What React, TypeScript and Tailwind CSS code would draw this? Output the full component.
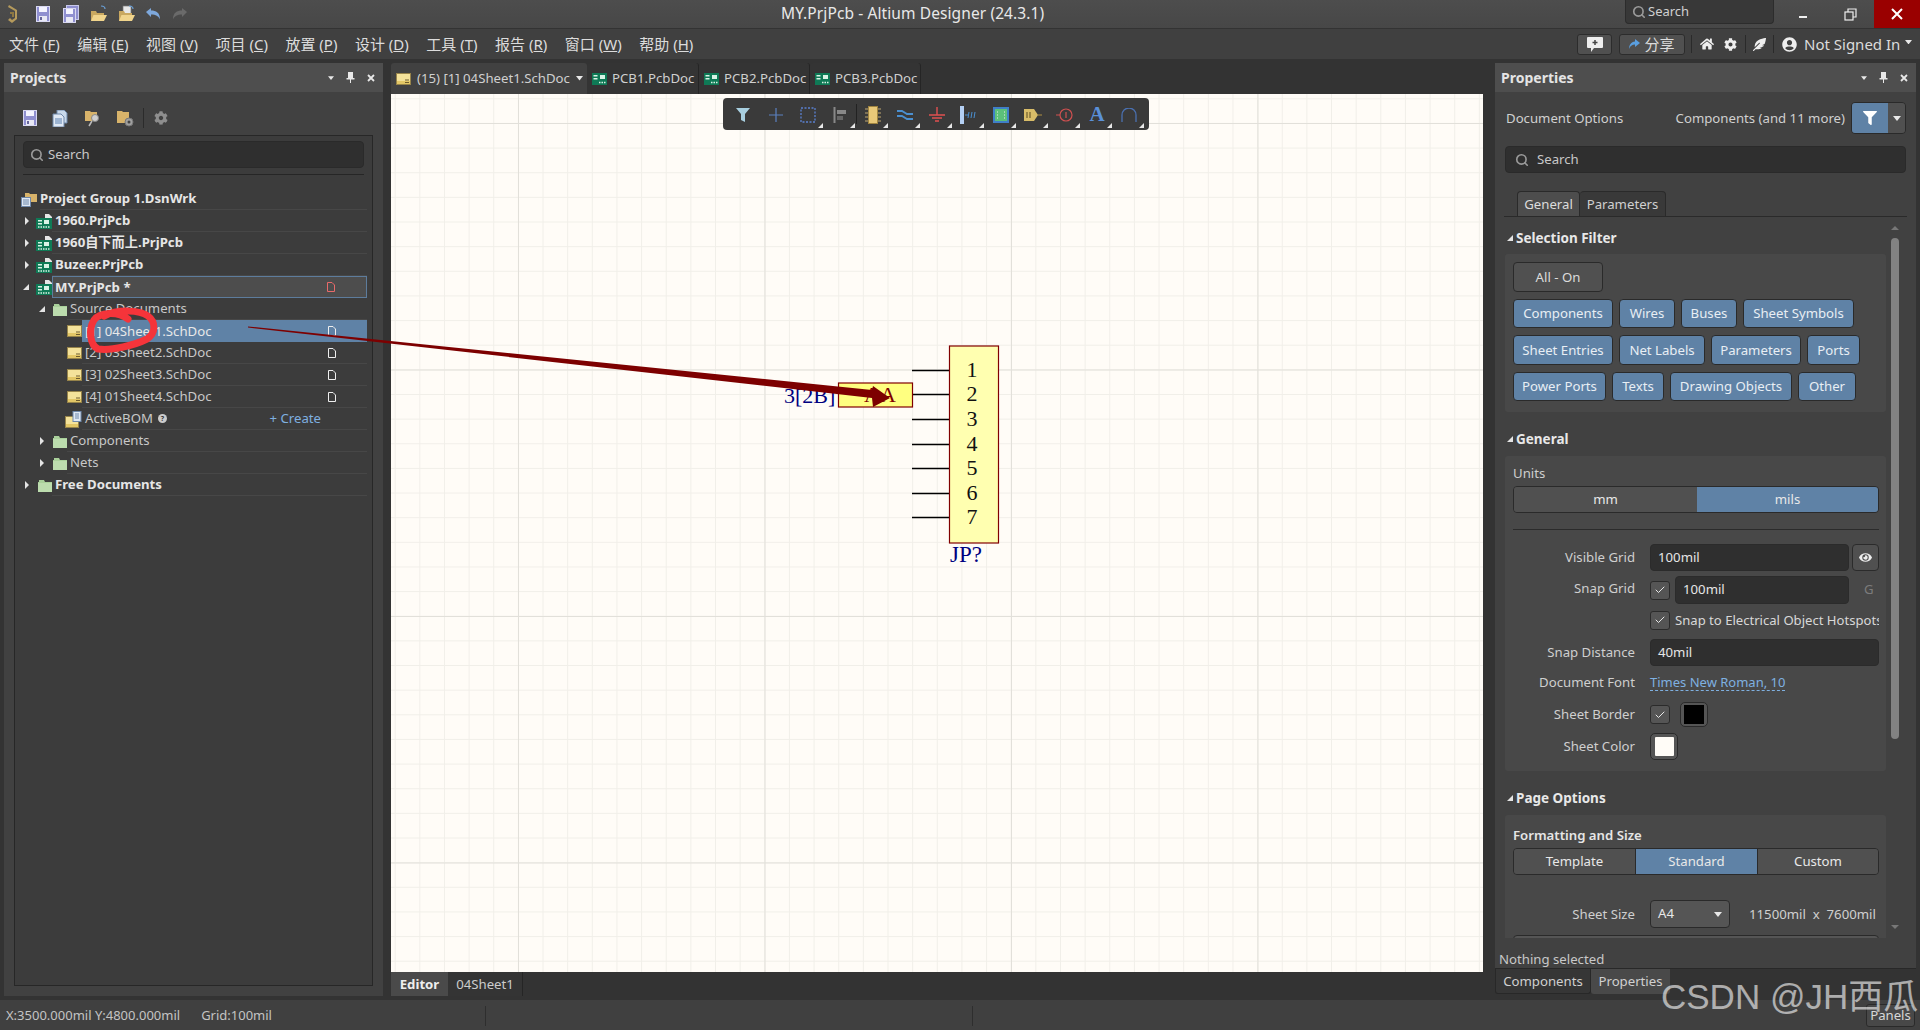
import React from "react";
import { Search, Check } from "lucide-react";
import { FaHome, FaCog, FaUserCircle, FaFilter, FaFeatherAlt, FaEye } from "react-icons/fa";

const Disk = ({ c = "#8f8fd0" }: { c?: string }) => (
  <svg width="14" height="16" viewBox="0 0 14 16"><rect x="0.5" y="0.5" width="13" height="15" fill={c} stroke="#d8d8f0" /><rect x="3" y="1" width="8" height="5" fill="#f4f4ff" /><rect x="3" y="10" width="8" height="5" fill="#e8e8f4" /><rect x="4" y="11" width="2" height="3" fill="#66669a" /></svg>
);
const DiskAll = () => (
  <svg width="16" height="18" viewBox="0 0 16 18"><rect x="3.5" y="0.5" width="12" height="14" fill="#8f8fd0" stroke="#c8c8ea" /><rect x="0.5" y="3.5" width="12" height="14" fill="#8f8fd0" stroke="#d8d8f0" /><rect x="3" y="4" width="7" height="5" fill="#f4f4ff" /><rect x="3" y="12" width="7" height="5" fill="#e8e8f4" /></svg>
);
const OpenFolder = ({ page }: { page?: boolean }) => (
  <svg width="18" height="18" viewBox="0 0 18 18">
    {page && <rect x="5" y="1" width="8" height="9" fill="#e8e8e8" stroke="#777" strokeWidth="0.7" />}
    <path d="M1 16V6h5l1 2h7v8z" fill="#c9a860" />
    <path d="M1 16l2.5-6H17l-3 6z" fill="#f0d48c" />
    <path d="M11 1c2 0 4 1 4 3" stroke="#6aa0d8" strokeWidth="1.2" fill="none" />
  </svg>
);
const ArrowUndo = ({ c, flip }: { c: string; flip?: boolean }) => (
  <svg width="16" height="14" viewBox="0 0 16 14" className={flip ? "-scale-x-100" : ""}><path d="M1 5l5-4v2.5c5 0 9 2 9 9-1.500-3.500-4-5-9-5V10z" fill={c} /></svg>
);
const Logo = () => (
  <svg width="12" height="20" viewBox="0 0 12 20"><path d="M2 1l8 5v9l-5 4-4-3 2-2 2 2 3-2V7L1 3z" fill="#b59a5c" /><path d="M3 8h4v5H5v-3H3z" fill="#8d7742" /></svg>
);
const SheetIcon = ({ w = 15 }: { w?: number }) => (
  <svg width={w} height="12" viewBox="0 0 15 12"><rect x="0.5" y="0.5" width="14" height="11" fill="#f4e29a" stroke="#96834a" /><rect x="1" y="8" width="13" height="3" fill="#e3c766" /><path d="M9 7h4M9 9.500h4" stroke="#6e5c2c" /></svg>
);
const BomIcon = () => (
  <svg width="17" height="17" viewBox="0 0 17 17"><rect x="0.5" y="5.5" width="13" height="11" fill="#f4e29a" stroke="#96834a" /><rect x="1" y="13" width="12" height="3" fill="#e3c766" /><rect x="8" y="0.5" width="8" height="10" fill="#dfe8f4" stroke="#6f88aa" /><path d="M10 3h4M10 5h4M10 7h4" stroke="#6f88aa" /></svg>
);
const PcbIcon = () => (
  <svg width="16" height="15" viewBox="0 0 16 15"><path d="M9 0h4l3 3v5H9z" fill="#e6e6e6" /><rect x="0" y="4" width="16" height="11" fill="#0f7a56" /><rect x="2" y="6" width="4" height="1.500" fill="#d9f3e6" /><rect x="2" y="9" width="4" height="1.500" fill="#d9f3e6" /><rect x="8" y="6" width="5" height="4" fill="#d9f3e6" /><path d="M2 13h12" stroke="#d9f3e6" strokeWidth="1.400" strokeDasharray="1.500 1" /></svg>
);
const PcbTab = () => (
  <svg width="15" height="12" viewBox="0 0 15 12"><rect width="15" height="12" fill="#0f7a56" /><rect x="1.500" y="2" width="4" height="1.500" fill="#d9f3e6" /><rect x="1.500" y="5" width="4" height="1.500" fill="#d9f3e6" /><rect x="8" y="2" width="5" height="4" fill="#d9f3e6" /><path d="M7 9.500h7" stroke="#d9f3e6" strokeWidth="1.400" strokeDasharray="1.500 1" /></svg>
);
const Folder = ({ w = 14 }: { w?: number }) => (
  <svg width={w} height="13" viewBox="0 0 14 13"><path d="M0 3h1V1h5l1 2h7v10H0z" fill="#a9d09a" /><path d="M0 4h14v9H0z" fill="#bcdcae" /></svg>
);
const GroupIcon = () => (
  <svg width="16" height="16" viewBox="0 0 16 16"><path d="M4 2h4l1 1h7v8H4z" fill="#d8b36a" /><rect x="0.500" y="6.500" width="9" height="9" fill="#dfe8f4" stroke="#6f88aa" /><path d="M2 9h6M2 11h6M2 13h6" stroke="#6f88aa" /></svg>
);
const TriOpen = () => (
  <svg width="6" height="6" viewBox="0 0 6 6"><path d="M6 0v6H0z" fill="#e4e4e4" /></svg>
);
const TriClosed = () => (
  <svg width="4" height="8" viewBox="0 0 4 8"><path d="M0 0l4 4-4 4z" fill="#e4e4e4" /></svg>
);
const DocIcon = ({ c = "#eeeeee" }: { c?: string }) => (
  <svg width="8" height="10" viewBox="0 0 8 10"><path d="M0.500 0.500h4.500l2.500 2.500v6.500h-7z" fill="none" stroke={c} /></svg>
);
const CaretDown = ({ c = "#e8e8e8", w = 8 }: { c?: string; w?: number }) => (
  <svg width={w} height={w / 2 + 1} viewBox="0 0 8 5"><path d="M0 0h8L4 5z" fill={c} /></svg>
);
const Pin = () => (
  <svg width="9" height="11" viewBox="0 0 9 11"><path d="M2 0h5v6h1.500v1.500H5V11H4V7.500H.5V6H2z" fill="#e8e8e8" /></svg>
);
const Cross = () => (
  <svg width="8" height="8" viewBox="0 0 8 8"><path d="M1 1l6 6M7 1L1 7" stroke="#e8e8e8" strokeWidth="1.800" /></svg>
);
const SearchIcon = ({ size = 14 }: { size?: number }) => <Search size={size} strokeWidth={2.8} color="#9a9a9a" />;

const PanelHead = ({ title }: { title: string }) => (
  <div className="flex h-[29px] items-center bg-[#4e4e4e] pl-[6px] pr-[8px]">
    <span className="text-[14px] font-bold text-[#e4e4e4]">{title}</span>
    <div className="ml-auto flex items-center gap-[12px]"><CaretDown w={6} /><Pin /><Cross /></div>
  </div>
);

const menus: [string, string][] = [["文件", "F"], ["编辑", "E"], ["视图", "V"], ["项目", "C"], ["放置", "P"], ["设计", "D"], ["工具", "T"], ["报告", "R"], ["窗口", "W"], ["帮助", "H"]];

type RowProps = { gutter: number; tri?: "open" | "closed"; triGap?: number; icon?: React.ReactNode; bold?: boolean; children: React.ReactNode; right?: React.ReactNode; state?: "sel" | "focus" };
const Row = ({ gutter, tri, triGap = 7, icon, bold, children, right, state }: RowProps) => (
  <div className="flex h-[22px]">
    <div className="flex shrink-0 items-center justify-end" style={{ width: gutter, gap: triGap }}>
      {tri === "open" && <TriOpen />}
      {tri === "closed" && <TriClosed />}
      {icon}
    </div>
    <div className={`flex min-w-0 flex-1 items-center text-[13.2px] ${bold ? "font-bold text-[#e6e6e6]" : "text-[#c8c8c8]"} ${state === "sel" ? "bg-[#5f82a6] pl-[3px] text-[#e8e8e8]" : state === "focus" ? "border border-[#5d7c9c] bg-[#4d4d4d] pl-[2px]" : "border-b border-[#474747] pl-[3px]"}`}>
      <span className="whitespace-nowrap pt-[1px]">{children}</span>
      {right && <div className="ml-auto mr-[31px] flex items-center">{right}</div>}
    </div>
  </div>
);

const Chip = ({ w, h = "h-[29px]", children }: { w: string; h?: string; children: string }) => (
  <div className={`flex ${h} ${w} items-center justify-center rounded-[4px] border border-[#2a2a2a] bg-[#5f82a6] pt-[1px] text-[13.2px] text-[#e8eef4]`}>{children}</div>
);

const Label = ({ children, extra = "pt-[1px]" }: { children: string; extra?: string }) => (
  <div className={`w-[122px] shrink-0 text-right text-[13.2px] text-[#cfcfcf] ${extra}`}>{children}</div>
);
const Input = ({ w, h, children }: { w: string; h: string; children: string }) => (
  <div className={`flex ${w} ${h} items-center rounded-[4px] border border-[#2b2b2b] bg-[#2f2f2f] pl-[7px] text-[13.2px] text-[#e6e6e6]`}>{children}</div>
);
const CheckBox = () => (
  <div className="flex h-[19px] w-[20px] shrink-0 items-center justify-center rounded-[3px] border border-[#2b2b2b] bg-[#555555]"><Check size={12} color="#e8e8e8" strokeWidth={2} /></div>
);

const SectionHead = ({ title }: { title: string }) => (
  <div className="flex h-[44px] items-center gap-[3px] pt-[10px] text-[13.5px] font-bold text-[#e8e8e8]"><span className="ml-[2px]"><TriOpen /></span>{title}</div>
);

const tools: { el: React.ReactNode; corner: boolean }[] = [
  { corner: false, el: <svg width="18" height="16" viewBox="0 0 18 16"><path d="M1 1h14l-5 6v8l-4-2V7z" fill="#a8cfe0" /></svg> },
  { corner: false, el: <svg width="16" height="16" viewBox="0 0 16 16"><path d="M8 1v14M1 8h14" stroke="#5a80c0" strokeWidth="1.200" /></svg> },
  { corner: true, el: <svg width="16" height="16" viewBox="0 0 16 16"><rect x="1" y="1" width="14" height="14" fill="none" stroke="#5a80d0" strokeDasharray="2 1.500" strokeWidth="1.300" /></svg> },
  { corner: true, el: <svg width="14" height="16" viewBox="0 0 14 16"><path d="M1.500 0v16" stroke="#888" strokeWidth="2" /><rect x="4" y="3" width="9" height="4" fill="#888" /><rect x="4" y="9" width="6" height="4" fill="#666" /></svg> },
  { corner: true, el: <svg width="16" height="18" viewBox="0 0 16 18"><path d="M0 3h16M0 7h16M0 11h16M0 15h16" stroke="#c0a870" /><rect x="3.500" y="0.500" width="9" height="17" fill="#e8c878" stroke="#a08440" /></svg> },
  { corner: true, el: <svg width="16" height="12" viewBox="0 0 16 12"><path d="M0 2h5l5 3h6M0 7h5l5 3h6" stroke="#4a8fd0" strokeWidth="1.800" fill="none" /></svg> },
  { corner: true, el: <svg width="16" height="16" viewBox="0 0 16 16"><path d="M8 0v8M0 8h16M3 11h10M6 14h4" stroke="#e05050" strokeWidth="1.400" /></svg> },
  { corner: true, el: <svg width="18" height="18" viewBox="0 0 18 18"><rect x="0" y="0" width="4" height="18" fill="#b4d0f4" /><path d="M5 9h3M9 6l-1 6M12 6l-1 6M15 6l-1 6" stroke="#4a8fd0" /></svg> },
  { corner: true, el: <svg width="16" height="16" viewBox="0 0 16 16"><rect x="0" y="0" width="16" height="16" fill="#3f7fc8" /><rect x="2" y="2" width="12" height="12" fill="#5cc07a" /><path d="M4 5h1M4 8h1M4 11h1M11 5h1M11 8h1M11 11h1" stroke="#eee" /></svg> },
  { corner: true, el: <svg width="18" height="12" viewBox="0 0 18 12"><path d="M0 0h10l4 6-4 6H0z" fill="#d8bc68" /><path d="M14 6h4" stroke="#b09040" /><path d="M3 3v6M6 3v6" stroke="#5a4a20" /></svg> },
  { corner: true, el: <svg width="18" height="14" viewBox="0 0 18 14"><circle cx="10" cy="7" r="6" fill="none" stroke="#d05050" strokeWidth="1.200" /><path d="M0 7h4M10 4v6" stroke="#d05050" strokeWidth="1.200" /></svg> },
  { corner: true, el: <span className="font-['Liberation_Serif',serif] text-[21px] font-bold leading-none text-[#5a90d8]">A</span> },
  { corner: true, el: <svg width="16" height="14" viewBox="0 0 16 14"><path d="M1 14V7a7 7 0 0 1 14 0v7" fill="none" stroke="#4a70b0" strokeWidth="1.300" /></svg> },
];

export default function App() {
  return (
    <div className="relative flex h-[1030px] w-[1920px] flex-col overflow-hidden bg-[#333333] font-['Noto_Sans','Noto_Sans_CJK_SC',sans-serif] text-[#dcdcdc]">
      {/* title bar */}
      <div className="flex h-[29px] shrink-0 items-center border-b border-[#333333] bg-[linear-gradient(#4d4d4d,#474747)]">
        <div className="ml-[7px] flex w-[12px] justify-center"><Logo /></div>
        <div className="ml-[17px] flex items-center"><Disk /></div>
        <div className="ml-[13px] flex items-center"><DiskAll /></div>
        <div className="ml-[11px] flex items-center"><OpenFolder /></div>
        <div className="ml-[10px] flex items-center"><OpenFolder page /></div>
        <div className="ml-[9px] flex items-center"><ArrowUndo c="#7ea8dc" /></div>
        <div className="ml-[11px] flex items-center"><ArrowUndo c="#6a6a6a" flip /></div>
        <span className="ml-[593px] whitespace-nowrap text-[15.5px] tracking-[0.1px] text-[#e8e8e8]">MY.PrjPcb - Altium Designer (24.3.1)</span>
        <div className="ml-auto flex h-[24px] w-[149px] self-start items-center gap-[2px] rounded-b-[4px] border border-t-0 border-[#2c2c2c] bg-[#383838] pl-[6px] text-[13px] text-[#d0d0d0]"><SearchIcon />Search</div>
        <div className="ml-[14px] flex w-[30px] justify-center"><div className="mt-[5px] h-[2px] w-[8px] bg-[#eeeeee]" /></div>
        <div className="ml-[25px] flex w-[14px] justify-center"><svg width="13" height="13" viewBox="0 0 13 13"><rect x="1" y="4" width="8" height="8" fill="none" stroke="#eee" strokeWidth="1.200" /><path d="M4 4V1h8v8H9" fill="none" stroke="#eee" strokeWidth="1.200" /></svg></div>
        <div className="ml-[17px] flex h-[28px] w-[46px] self-start items-center justify-center bg-[#9a0000]"><svg width="12" height="12" viewBox="0 0 12 12"><path d="M1 1l10 10M11 1L1 11" stroke="#fff" strokeWidth="2" /></svg></div>
      </div>

      {/* menu bar */}
      <div className="flex h-[30px] shrink-0 items-center bg-[#404040] pl-[9px] pr-[8px]">
        <div className="flex gap-[17.5px] text-[15px] text-[#dcdcdc]">
          {menus.map(([n, k]) => (
            <span key={k} className="whitespace-nowrap">{n} (<u>{k}</u>)</span>
          ))}
        </div>
        <div className="ml-auto flex items-center">
          <div className="flex h-[21px] w-[35px] items-center justify-center rounded-[3px] border border-[#2c2c2c] bg-[#505050]">
            <svg width="16" height="15" viewBox="0 0 16 15"><path d="M1 0h14a1 1 0 0 1 1 1v9a1 1 0 0 1-1 1H7l-3 4v-4H1a1 1 0 0 1-1-1V1a1 1 0 0 1 1-1z" fill="#eeeeee" /><path d="M8 3v5M5.500 5.500h5" stroke="#444" strokeWidth="1.500" /></svg>
          </div>
          <div className="ml-[7px] flex h-[21px] w-[66px] items-center justify-center gap-[4px] rounded-[3px] border border-[#2c2c2c] bg-[#505050] text-[15px] text-[#dcdcdc]">
            <svg width="11" height="10" viewBox="0 0 11 10"><path d="M6 0l5 4-5 4V5.500C3 5.500 1 7 0 10c0-4 2-7 6-7.500z" fill="#5a9fe0" /></svg>分享
          </div>
          <div className="ml-[6px] mr-[8px] h-[18px] w-px bg-[#2a2a2a]" />
          <FaHome size={14} color="#eeeeee" />
          <FaCog size={13} color="#eeeeee" className="ml-[10px]" />
          <div className="ml-[8px] mr-[7px] h-[18px] w-px bg-[#2a2a2a]" />
          <FaFeatherAlt size={13} color="#eeeeee" />
          <div className="ml-[7px] mr-[8px] h-[18px] w-px bg-[#2a2a2a]" />
          <FaUserCircle size={15} color="#eeeeee" />
          <span className="ml-[7px] w-[99px] whitespace-nowrap text-[15px] text-[#dcdcdc]">Not Signed In</span>
          <div className="ml-[2px] mb-[4px]"><CaretDown w={7} /></div>
        </div>
      </div>

      {/* main */}
      <div className="flex min-h-0 flex-1 pt-[4px]">
        {/* projects */}
        <div className="ml-[4px] mb-[4px] flex w-[379px] shrink-0 flex-col bg-[#414141]">
          <PanelHead title="Projects" />
          <div className="flex h-[43px] shrink-0 items-center pt-[9px]">
            <div className="ml-[19px] flex w-[14px] justify-center"><Disk /></div>
            <div className="ml-[15px] flex items-center"><svg width="16" height="17" viewBox="0 0 16 17"><path d="M5 0h7l3 3v10H5z" fill="#c8d8ea" stroke="#6f88aa" /><path d="M1 4h8l3 3v10H1z" fill="#dfe8f4" stroke="#6f88aa" /><path d="M3 9h7M3 11h7M3 13h7" stroke="#5a80b0" /></svg></div>
            <div className="ml-[17px] flex items-center"><svg width="17" height="17" viewBox="0 0 17 17"><path d="M0 1h5l1 1h6v9H0z" fill="#d8b36a" /><circle cx="10" cy="8" r="3.500" fill="#d0d0d0" stroke="#888" /><path d="M7 11l-3 5" stroke="#bbb" strokeWidth="1.500" /></svg></div>
            <div className="ml-[15px] flex items-center"><svg width="17" height="17" viewBox="0 0 17 17"><path d="M0 1h5l1 1h6v11H0z" fill="#d8b36a" /><circle cx="12" cy="12" r="4" fill="#a0a0a0" stroke="#777" /><circle cx="12" cy="12" r="1.500" fill="#444" /></svg></div>
            <div className="ml-[9px] h-[20px] w-px bg-[#2b2b2b]" />
            <FaCog size={14} color="#8e8e8e" className="ml-[10px]" />
          </div>
          <div className="mx-[10px] flex h-[851px] flex-col border border-[#272727] bg-[#3c3c3c]">
            <div className="mx-[8px] mt-[5px] flex h-[27px] items-center gap-[4px] rounded-[4px] border border-[#2a2a2a] bg-[#2f2f2f] pl-[6px] text-[13.2px] text-[#c8c8c8]"><SearchIcon />Search</div>
            <div className="mx-[8px] mt-[6px] h-px bg-[#262626]" />
            <div className="mt-[13px] pr-[5px]">
              <Row gutter={25} icon={<span className="mr-[3px] flex"><GroupIcon /></span>} bold><span className="-ml-[3px]">Project Group 1.DsnWrk</span></Row>
              <Row gutter={37} tri="closed" icon={<PcbIcon />} bold>1960.PrjPcb</Row>
              <Row gutter={37} tri="closed" icon={<PcbIcon />} bold>1960自下而上.PrjPcb</Row>
              <Row gutter={37} tri="closed" icon={<PcbIcon />} bold>Buzeer.PrjPcb</Row>
              <Row gutter={37} tri="open" icon={<PcbIcon />} bold state="focus" right={<DocIcon c="#e86a6a" />}>MY.PrjPcb *</Row>
              <Row gutter={52} tri="open" triGap={8} icon={<Folder />}>Source Documents</Row>
              <Row gutter={67} icon={<SheetIcon />} state="sel" right={<DocIcon />}>[1] 04Sheet1.SchDoc</Row>
              <Row gutter={67} icon={<SheetIcon />} right={<DocIcon />}>[2] 03Sheet2.SchDoc</Row>
              <Row gutter={67} icon={<SheetIcon />} right={<DocIcon />}>[3] 02Sheet3.SchDoc</Row>
              <Row gutter={67} icon={<SheetIcon />} right={<DocIcon />}>[4] 01Sheet4.SchDoc</Row>
              <Row gutter={67} icon={<BomIcon />} right={<span className="mr-[15px] pt-[1px] text-[13.2px] text-[#7fb0e0]">+ Create</span>}>
                <span className="inline-flex items-center gap-[5px]">ActiveBOM<span className="flex h-[9px] w-[9px] items-center justify-center rounded-full bg-[#cccccc] text-[7px] font-bold text-[#333333]">?</span></span>
              </Row>
              <Row gutter={52} tri="closed" triGap={9} icon={<Folder />}>Components</Row>
              <Row gutter={52} tri="closed" triGap={9} icon={<Folder />}>Nets</Row>
              <Row gutter={37} tri="closed" triGap={9} icon={<Folder />} bold>Free Documents</Row>
            </div>
          </div>
        </div>

        {/* documents */}
        <div className="ml-[8px] mb-[4px] flex w-[1092px] shrink-0 flex-col">
          <div className="flex h-[31px] shrink-0 text-[13.2px] text-[#d0d0d0]">
            <div className="flex w-[196px] items-center gap-[6px] rounded-t-[3px] bg-[#414141] pl-[5px]"><SheetIcon />(15) [1] 04Sheet1.SchDoc<CaretDown w={7} /></div>
            {["PCB1.PcbDoc", "PCB2.PcbDoc", "PCB3.PcbDoc"].map((t, i) => (
              <div key={t} className={`flex ${i === 0 ? "w-[112px]" : "w-[111px]"} items-center gap-[5px] rounded-t-[3px] border-r border-[#252525] bg-[#343434] pl-[5px]`}><PcbTab />{t}</div>
            ))}
          </div>
          <div className="relative flex-1 overflow-hidden bg-[#fffcf7] bg-[linear-gradient(to_right,#e2e0da_1px,transparent_1px),linear-gradient(to_bottom,#e2e0da_1px,transparent_1px),linear-gradient(to_right,#f1efe9_1px,transparent_1px),linear-gradient(to_bottom,#f1efe9_1px,transparent_1px)] bg-size-[246.5px_246.5px,246.5px_246.5px,24.65px_24.65px,24.65px_24.65px] bg-position-[127px_0,0_29px,3.7px_0,0_4.3px]">
            <div className="absolute left-[332px] top-[4px] flex h-[32px] w-[426px] items-start rounded-[4px] bg-[#3a3a3a] pl-[5px] pt-[3px]">
              {tools.map((t, i) => (
                <React.Fragment key={i}>
                  {i === 4 && <div className="mt-[3px] h-[20px] w-px shrink-0 bg-[#222222]" />}
                  <div className="relative flex h-[27px] w-[32px] shrink-0 items-center justify-center">
                    {t.el}
                    {t.corner && <svg width="5" height="5" viewBox="0 0 5 5" className="absolute bottom-0 right-[1px]"><path d="M5 0v5H0z" fill="#e8e8e8" /></svg>}
                  </div>
                </React.Fragment>
              ))}
            </div>
            <svg className="absolute inset-0 h-full w-full" viewBox="391 94 1092 877">
              <g stroke="#000000" strokeWidth="1.500">
                {[370, 394, 419, 444, 468, 493, 517].map((y) => (
                  <line key={y} x1="912" x2="950" y1={y} y2={y} />
                ))}
              </g>
              <rect x="949.500" y="345.500" width="49" height="197" fill="#ffffb0" stroke="#800000" strokeWidth="1.200" />
              <rect x="838.500" y="382.500" width="74" height="24" fill="#ffff80" stroke="#800000" strokeWidth="1.200" />
              <g fontFamily="Liberation Serif, serif" fontSize="22" fill="#111111" textAnchor="middle">
                {[1, 2, 3, 4, 5, 6, 7].map((n, i) => (
                  <text key={n} x="972" y={[376, 400, 425, 450, 474, 499, 523][i]}>{n}</text>
                ))}
              </g>
              <text x="864" y="401" fontFamily="Liberation Serif, serif" fontSize="22" fill="#800000">AA</text>
              <text x="784" y="402" fontFamily="Liberation Serif, serif" fontSize="22" fill="#000080">3[2B]</text>
              <text x="950" y="561" fontFamily="Liberation Serif, serif" fontSize="23" fill="#000080">JP?</text>
            </svg>
          </div>
          <div className="flex h-[24px] shrink-0 text-[13.2px]">
            <div className="flex w-[57px] items-center justify-center bg-[#4a4a4a] pt-[1px] font-bold text-[#eeeeee]">Editor</div>
            <div className="flex w-[75px] items-center justify-center border-r border-[#252525] bg-[#343434] pt-[1px] text-[#cccccc]">04Sheet1</div>
          </div>
        </div>

        {/* properties */}
        <div className="ml-[12px] flex w-[421px] shrink-0 flex-col">
          <PanelHead title="Properties" />
          <div className="flex h-[876px] shrink-0 flex-col bg-[#414141]">
            <div className="mt-[10px] flex h-[32px] shrink-0 items-center pl-[11px] pr-[10px] text-[13.2px] text-[#d0d0d0]">
              <span className="pt-[1px]">Document Options</span>
              <span className="ml-auto pt-[1px]">Components (and 11 more)</span>
              <div className="ml-[6px] flex h-[32px] w-[55px] overflow-hidden rounded-[4px] border border-[#2a2a2a]">
                <div className="flex w-[36px] items-center justify-center bg-[#5f82a6]"><FaFilter size={14} color="#ffffff" /></div>
                <div className="flex flex-1 items-center justify-center bg-[#505050]"><CaretDown /></div>
              </div>
            </div>
            <div className="mx-[10px] mt-[12px] flex h-[27px] shrink-0 items-center gap-[8px] rounded-[4px] border border-[#2a2a2a] bg-[#2f2f2f] pl-[9px] pt-[1px] text-[13.2px] text-[#c8c8c8]"><SearchIcon />Search</div>
            <div className="mx-[9px] mt-[18px] flex h-[26px] shrink-0 border-b border-[#2a2a2a] pl-[13px] text-[13.2px]">
              <div className="flex w-[63px] items-center justify-center rounded-t-[4px] border border-b-0 border-[#2a2a2a] bg-[#4d4d4d] pt-[1px] text-[#dcdcdc]">General</div>
              <div className="flex w-[86px] items-center justify-center rounded-t-[4px] border border-b-0 border-l-0 border-[#2a2a2a] bg-[#393939] pt-[1px] text-[#d0d0d0]">Parameters</div>
            </div>
            <div className="flex h-[721px] shrink-0">
              <div className="ml-[10px] h-full w-[381px] shrink-0 overflow-hidden">
                <div className="flex h-[37px] items-center gap-[3px] pt-[5px] text-[13.5px] font-bold text-[#e8e8e8]"><span className="ml-[2px]"><TriOpen /></span>Selection Filter</div>
                <div className="flex flex-col rounded-[3px] bg-[#484848] px-[8px] pb-[11px] pt-[8px]">
                  <div className="flex h-[30px] w-[90px] items-center justify-center rounded-[4px] border border-[#2a2a2a] bg-[#505050] pt-[1px] text-[13.2px] text-[#dcdcdc]">All - On</div>
                  <div className="mt-[7px] flex gap-[6px]">
                    <Chip w="w-[100px]">Components</Chip><Chip w="w-[56px]">Wires</Chip><Chip w="w-[56px]">Buses</Chip><Chip w="w-[111px]">Sheet Symbols</Chip>
                  </div>
                  <div className="mt-[7px] flex gap-[6px]">
                    <Chip h="h-[30px]" w="w-[100px]">Sheet Entries</Chip><Chip h="h-[30px]" w="w-[86px]">Net Labels</Chip><Chip h="h-[30px]" w="w-[90px]">Parameters</Chip><Chip h="h-[30px]" w="w-[53px]">Ports</Chip>
                  </div>
                  <div className="mt-[7px] flex gap-[6px]">
                    <Chip w="w-[93px]">Power Ports</Chip><Chip w="w-[52px]">Texts</Chip><Chip w="w-[122px]">Drawing Objects</Chip><Chip w="w-[58px]">Other</Chip>
                  </div>
                </div>

                <SectionHead title="General" />
                <div className="flex flex-col rounded-[3px] bg-[#484848] px-[8px] pb-[11px] pr-[7px] pt-[9px]">
                  <div className="h-[16px] text-[13.2px] leading-[16px] text-[#cfcfcf]">Units</div>
                  <div className="mt-[5px] flex h-[27px] overflow-hidden rounded-[4px] border border-[#2a2a2a] text-[13.2px] text-[#e8e8e8]">
                    <div className="flex w-[183px] items-center justify-center bg-[#505050] pt-[1px]">mm</div>
                    <div className="flex flex-1 items-center justify-center bg-[#5f82a6] pt-[1px]">mils</div>
                  </div>
                  <div className="mt-[16px] h-px bg-[#2b2b2b]" />
                  <div className="mt-[14px] flex h-[27px] items-center gap-[15px]">
                    <Label>Visible Grid</Label>
                    <div className="flex flex-1 gap-[3px]">
                      <Input w="w-[199px]" h="h-[27px]">100mil</Input>
                      <div className="flex h-[27px] w-[27px] items-center justify-center rounded-[4px] border border-[#2b2b2b] bg-[#505050]"><FaEye size={13} color="#eeeeee" /></div>
                    </div>
                  </div>
                  <div className="mt-[5px] flex h-[28px] items-center gap-[15px]">
                    <Label extra="pb-[3px]">Snap Grid</Label>
                    <div className="flex flex-1 items-center gap-[5px]">
                      <CheckBox />
                      <Input w="w-[174px]" h="h-[28px]">100mil</Input>
                      <span className="ml-[10px] text-[13.2px] text-[#7c7c7c]">G</span>
                    </div>
                  </div>
                  <div className="mt-[6px] flex h-[20px] items-center pl-[137px]">
                    <CheckBox />
                    <span className="ml-[5px] w-[204px] overflow-hidden whitespace-nowrap pt-[1px] text-[13.1px] text-[#d8d8d8]">Snap to Electrical Object Hotspots</span>
                  </div>
                  <div className="mt-[9px] flex h-[27px] items-center gap-[15px]">
                    <Label>Snap Distance</Label>
                    <Input w="flex-1" h="h-[27px]">40mil</Input>
                  </div>
                  <div className="mt-[8px] flex h-[16px] items-center gap-[15px]">
                    <Label>Document Font</Label>
                    <span className="border-b border-dashed border-[#7fb0e0] text-[13px] leading-[16px] text-[#7fb0e0]">Times New Roman, 10</span>
                  </div>
                  <div className="mt-[12px] flex h-[25px] items-center gap-[15px]">
                    <Label>Sheet Border</Label>
                    <CheckBox />
                    <div className="-ml-[5px] flex h-[25px] w-[28px] items-center justify-center rounded-[5px] border border-[#2a2a2a] bg-[#555555]"><div className="h-[19px] w-[20px] bg-[#000000]" /></div>
                  </div>
                  <div className="mt-[6px] flex h-[27px] items-center gap-[15px]">
                    <Label>Sheet Color</Label>
                    <div className="flex h-[27px] w-[28px] items-center justify-center rounded-[5px] border border-[#2a2a2a] bg-[#555555]"><div className="h-[19px] w-[19px] rounded-[1px] bg-[#fffcf7]" /></div>
                  </div>
                </div>

                <SectionHead title="Page Options" />
                <div className="flex flex-col rounded-[3px] bg-[#484848] px-[8px] pb-[11px] pr-[7px] pt-[12px]">
                  <div className="h-[16px] text-[13.2px] font-semibold leading-[16px] text-[#e6e6e6]">Formatting and Size</div>
                  <div className="mt-[5px] flex h-[27px] overflow-hidden rounded-[4px] border border-[#2a2a2a] text-[13.2px] text-[#e8e8e8]">
                    <div className="flex w-[122px] items-center justify-center border-r border-[#2a2a2a] bg-[#505050] pt-[1px]">Template</div>
                    <div className="flex w-[121px] items-center justify-center bg-[#5f82a6] pt-[1px]">Standard</div>
                    <div className="flex flex-1 items-center justify-center border-l border-[#2a2a2a] bg-[#505050] pt-[1px]">Custom</div>
                  </div>
                  <div className="mt-[25px] flex h-[28px] items-center gap-[15px]">
                    <Label>Sheet Size</Label>
                    <div className="flex h-[28px] w-[80px] items-center justify-between rounded-[4px] border border-[#2a2a2a] bg-[#555555] px-[7px] text-[13.2px] text-[#e8e8e8]">A4<CaretDown /></div>
                    <span className="ml-[4px] whitespace-pre pt-[1px] text-[13.2px] text-[#d0d0d0]">11500mil  x  7600mil</span>
                  </div>
                  <div className="mt-[7px] h-[28px] rounded-[4px] border border-[#2a2a2a] bg-[#555555]" />
                </div>
              </div>
              <div className="ml-[4px] flex h-full w-[10px] shrink-0 flex-col items-center">
                <svg width="8" height="4" viewBox="0 0 8 4" className="mt-[9px]"><path d="M4 0l4 4H0z" fill="#777777" /></svg>
                <div className="mt-[8px] h-[501px] w-[8px] rounded-[4px] bg-[#828282]" />
                <svg width="8" height="4" viewBox="0 0 8 4" className="mt-[186px]"><path d="M0 0h8L4 4z" fill="#777777" /></svg>
              </div>
            </div>
            <div className="flex h-[30px] shrink-0 items-end pl-[4px] text-[13.2px] leading-[18px] text-[#c8c8c8]">Nothing selected</div>
          </div>
          <div className="flex h-[26px] shrink-0 border-t border-[#282828] text-[13.2px] text-[#d0d0d0]">
            <div className="flex w-[96px] items-center justify-center rounded-b-[3px] border border-t-0 border-[#282828] bg-[#363636] pt-[1px]">Components</div>
            <div className="flex w-[79px] items-center justify-center rounded-b-[3px] bg-[#494949] pt-[1px]">Properties</div>
          </div>
        </div>
      </div>

      {/* status bar */}
      <div className="flex h-[30px] shrink-0 items-center bg-[#404040] pl-[6px] pt-[1px] text-[13px] text-[#c4c4c4]">
        <span className="whitespace-nowrap">X:3500.000mil Y:4800.000mil</span>
        <span className="ml-[21px] whitespace-nowrap">Grid:100mil</span>
        <div className="ml-[213px] h-[20px] w-px bg-[#2e2e2e]" />
        <div className="ml-[486px] h-[20px] w-px bg-[#2e2e2e]" />
        <div className="ml-auto mr-[5px] flex h-[23px] w-[49px] items-center justify-center rounded-[3px] border border-[#2a2a2a] bg-[#484848] text-[13.2px] text-[#d8d8d8]">Panels</div>
      </div>

      {/* annotations drawn over the screenshot */}
      <svg className="pointer-events-none absolute inset-0" width="1920" height="1030" viewBox="0 0 1920 1030">
        <polygon points="248,326.500 872,390 873,386 890,398 873,407 872,398 248,327.500" fill="#7d0000" />
        <path d="M128 319C118 311 100 312 94 320C88 330 90 345 98 349C112 351 135 345 147 339C156 333 156 322 148 316C140 310 118 309 104 316" fill="none" stroke="#f5343a" strokeWidth="7" strokeLinecap="round" />
      </svg>
      <div className="pointer-events-none absolute left-[1661px] top-[975px] whitespace-nowrap font-['Liberation_Sans','Noto_Sans_CJK_SC',sans-serif] text-[35px] leading-[44px] text-[#ffffff]/60">CSDN @JH西瓜</div>
    </div>
  );
}
